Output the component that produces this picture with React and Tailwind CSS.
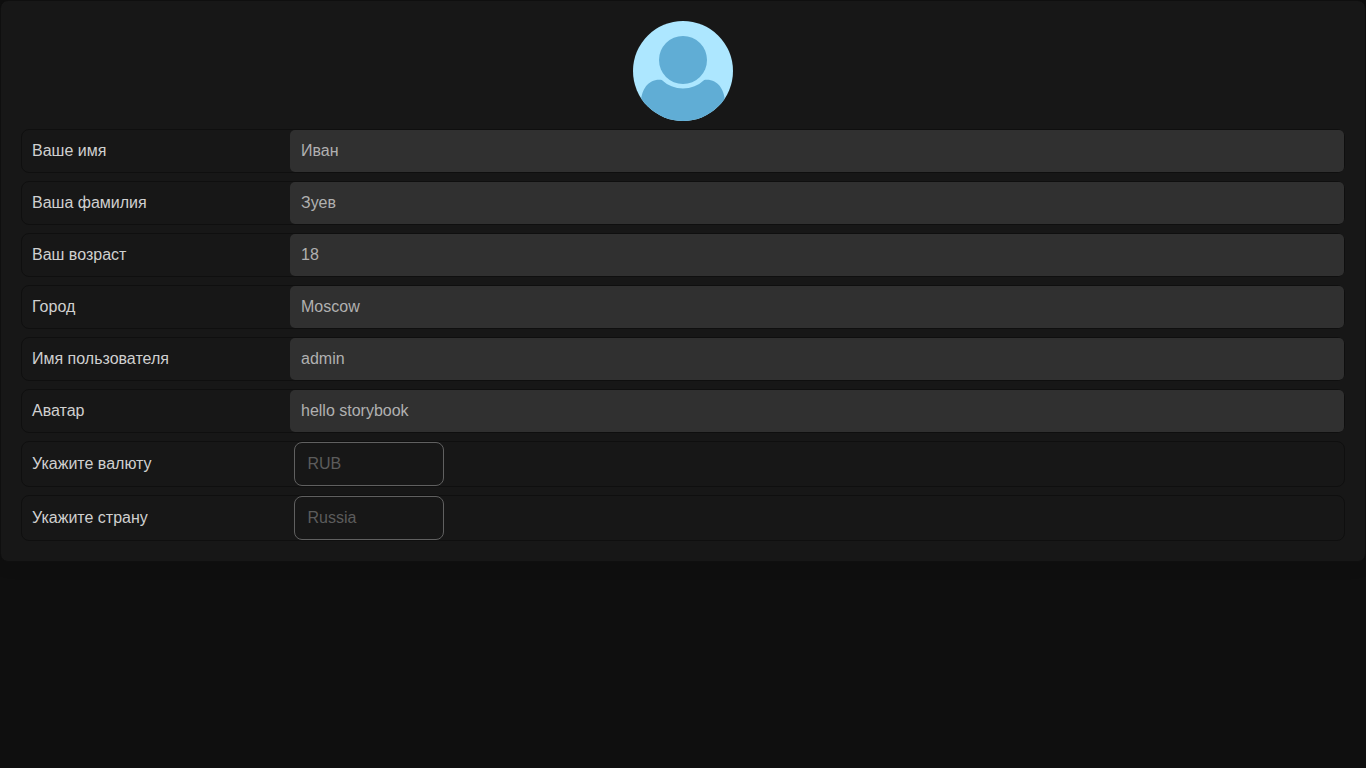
const fields = [
  ["Ваше имя", "Иван"],
  ["Ваша фамилия", "Зуев"],
  ["Ваш возраст", "18"],
  ["Город", "Moscow"],
  ["Имя пользователя", "admin"],
  ["Аватар", "hello storybook"],
];

const selects = [
  ["Укажите валюту", "RUB"],
  ["Укажите страну", "Russia"],
];

function Avatar() {
  return (
    <svg className="size-[100px] shrink-0 self-center" viewBox="0 0 100 100">
      <clipPath id="avatar-circle">
        <circle cx="50" cy="50" r="50" />
      </clipPath>
      <circle cx="50" cy="50" r="50" fill="#ade7ff" />
      <g clipPath="url(#avatar-circle)" fill="#60add5">
        <circle cx="50" cy="39" r="24" />
        <path d="M8 80C9 68 15.500 57.500 28.800 59A30.500 30.500 0 0 0 71.200 59C84.500 57.500 91 68 92 80V100H8Z" />
      </g>
    </svg>
  );
}

export default function App() {
  return (
    <div className="min-h-screen bg-[#0f0f0f] font-['Liberation_Sans',sans-serif] text-base leading-[18px]">
      <div className="flex flex-col gap-2 rounded-lg border border-[#0f0f0f] bg-[#171717] p-5 shadow-[0_4px_16px_rgba(0,0,0,0.1)]">
        <Avatar />
        {fields.map(([label, value]) => (
          <label key={label} className="flex h-11 rounded-lg border border-[#0f0f0f]">
            <span className="flex w-[268px] shrink-0 items-center pl-2.5 text-[#d0d0d0]">{label}</span>
            <input
              readOnly
              value={value}
              className="min-w-0 flex-1 rounded-[5px] bg-[#303030] px-[11px] text-[#b0b0b0] outline-none"
            />
          </label>
        ))}
        {selects.map(([label, value]) => (
          <div key={label} className="flex h-[46px] rounded-lg border border-[#0f0f0f]">
            <span className="flex w-[272px] shrink-0 items-center pl-2.5 text-[#d0d0d0]">{label}</span>
            <button className="w-[150px] rounded-lg border border-[#606060] px-[12.5px] text-left text-[#5c5c5c]">
              {value}
            </button>
          </div>
        ))}
      </div>
    </div>
  );
}
